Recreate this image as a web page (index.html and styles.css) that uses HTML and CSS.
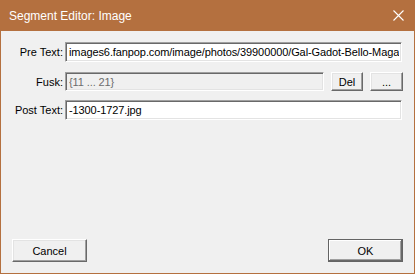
FILE: index.html
```html
<!DOCTYPE html>
<html lang="en">
<head>
    <meta charset="UTF-8">
    <title>Segment Editor: Image</title>
    <link rel="stylesheet" href="styles.css">
</head>
<body>
    <div class="window">
        <!-- Title bar -->
        <div class="titlebar">
            <span class="title">Segment Editor: Image</span>
            <svg class="close" width="11" height="11" viewBox="0 0 11 11">
                <path d="M0.5 0.5 L10.5 10.5 M10.5 0.5 L0.5 10.5" stroke="#fff" stroke-width="1.1" fill="none"/>
            </svg>
        </div>

        <!-- Client area -->
        <div class="client">
            <div class="form">
                <label class="label" for="pre">Pre Text:</label>
                <input class="field" id="pre" type="text" value="images6.fanpop.com/image/photos/39900000/Gal-Gadot-Bello-Magazine-gal-gadot">

                <label class="label row-fusk">Fusk:</label>
                <div class="fusk-row row-fusk">
                    <input class="field disabled" type="text" value="{11 ... 21}" disabled>
                    <button class="btn del">Del</button>
                    <button class="btn more">...</button>
                </div>

                <label class="label" for="post">Post Text:</label>
                <input class="field" id="post" type="text" value="-1300-1727.jpg">
            </div>

            <div class="footer">
                <button class="btn wide">Cancel</button>
                <button class="btn wide default">OK</button>
            </div>
        </div>
    </div>
</body>
</html>
```

FILE: styles.css
```css
body {
    margin: 0;
    padding: 0;
    font-family: "Liberation Sans", Arial, sans-serif;
    font-size: 11px;
    color: #000;
    background: #fff;
}

.window {
    width: 415px;
    height: 274px;
    box-sizing: border-box;
    background: #b4703f;
    display: flex;
    flex-direction: column;
}

.titlebar {
    height: 31px;
    display: flex;
    align-items: center;
    justify-content: space-between;
    padding: 0 10px 0 9px;
    color: #fff;
}

.title {
    font-size: 12px;
    margin-top: 1px;
}

.close {
    display: block;
    margin-right: 1px;
}

.client {
    flex: 1;
    margin: 0 1px 1px;
    background: #f0f0f0;
    display: flex;
    flex-direction: column;
    justify-content: space-between;
    padding: 11px 11px 11px 0;
}

.form {
    display: grid;
    grid-template-columns: 62px 1fr;
    column-gap: 2px;
    row-gap: 9px;
    align-items: center;
    padding-right: 1px;
}

.label {
    text-align: right;
    white-space: nowrap;
}

.row-fusk {
    margin-top: 1px;
}

.field {
    box-sizing: border-box;
    width: 100%;
    height: 20px;
    margin: 0;
    padding: 0 2px 0 3px;
    font-family: "Liberation Sans", Arial, sans-serif;
    font-size: 11px;
    letter-spacing: -0.1px;
    color: #000;
    background: #fff;
    border: 1px solid;
    border-color: #a0a0a0 #fff #fff #a0a0a0;
    box-shadow: inset 1px 1px 0 #696969, inset -1px -1px 0 #e3e3e3;
    outline: none;
}

.field.disabled {
    background: #f0f0f0;
    color: #6d6d6d;
}

.fusk-row {
    display: flex;
    gap: 7px;
    margin-right: -1px;
}

.fusk-row .field {
    flex: 1;
    height: 19px;
}

.btn {
    box-sizing: border-box;
    margin: 0;
    padding: 0;
    font-family: "Liberation Sans", Arial, sans-serif;
    font-size: 11px;
    color: #000;
    background: #f0f0f0;
    border: 1px solid;
    border-color: #fff #696969 #696969 #fff;
    box-shadow: inset -1px -1px 0 #a0a0a0, inset 1px 1px 0 #e3e3e3;
}

.btn.del {
    width: 32px;
    height: 19px;
}

.btn.more {
    width: 33px;
    height: 19px;
}

.btn.wide {
    width: 75px;
    height: 23px;
}

.btn.default {
    border-color: #646464;
    box-shadow: inset -1px -1px 0 #696969, inset 1px 1px 0 #fff, inset -2px -2px 0 #a0a0a0;
}

.footer {
    display: flex;
    justify-content: space-between;
    padding-left: 11px;
}
```
